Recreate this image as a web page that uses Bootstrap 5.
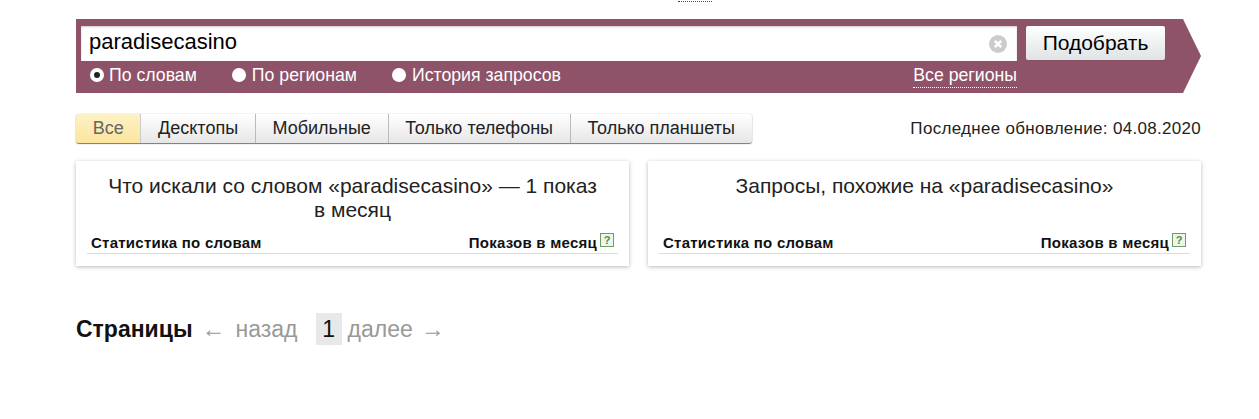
<!DOCTYPE html>
<html lang="ru"><head><meta charset="utf-8">
<link href="https://cdn.jsdelivr.net/npm/bootstrap@5.3.0/dist/css/bootstrap.min.css" rel="stylesheet">
<style>
html,body{height:419px;overflow:hidden}
body{background:#fff;color:#000;font-family:"Liberation Sans",Arial,sans-serif;font-size:16px}
.wrap{padding:0 58px 0 76px;width:1259px}
.topline{height:19px;overflow:hidden}
.topline span{display:block;margin-left:602px;width:34px;height:2px;border-bottom:1px dotted #446}
.searchbar{height:74px;background:#8f5369;clip-path:polygon(0 0,1107px 0,1125px 37px,1107px 74px,0 74px);padding:7px 0 0 5px;width:1125px}
.querybox{width:936px;height:35px;background:#fff;font-size:22px;line-height:31px;padding:0 0 4px 8px;box-shadow:inset 0 1px 2px #ccc}
.clearx{width:18px;height:18px;margin-right:10px;margin-top:4px;flex:none}
.gobtn{width:139px;height:34px;margin-left:9px;padding:0;font-size:21px;line-height:32px;color:#000;border:0;border-radius:2px;background:linear-gradient(#fff,#dfe3e4);box-shadow:0 0 1px #555}
.optrow{width:936px;height:28px;color:#fff;font-size:17.7px;padding:0 0 0 9px}
.dot{width:14px;height:14px;border-radius:50%;background:#fff;display:inline-block;margin-right:6px;flex:none}
.dot.on{border:4px solid #fff;background:#222;margin-right:5px}
.optitem{margin-right:35px}
.regions{color:#fff;border-bottom:1px dotted #fff;line-height:24px;height:25px;margin-left:auto}
.tabrow{margin-top:21px;height:30px}
.tabset{display:flex;height:29px;border-radius:3px;box-shadow:0 1px 1px #777,0 0 1px #888;background:linear-gradient(#fff,#e6e6e6)}
.tabit{font-size:18px;line-height:28px;padding:0 16.7px;border-right:1px solid #bbb;color:#222}
.tabit:last-child{border-right:0}
.tabit.cur{background:linear-gradient(#fdf2c6,#fbe49e);color:#666;border-radius:3px 0 0 3px;border-right:1px solid #ccc}
.stamp{margin-left:auto;font-size:17px;letter-spacing:.3px;color:#222;line-height:30px}
.pane{width:553px;height:105px;box-shadow:0 1px 4px rgba(0,0,0,.28);padding:13px 11px 0;background:#fff}
.pane+.pane{margin-left:19px}
.panerow{margin-top:17px}
.panehead{font-size:21px;line-height:24px;text-align:center;height:48px;color:#222;padding:0 15px}
.panecols{font-size:15px;letter-spacing:.25px;font-weight:700;line-height:16px;border-bottom:1px solid #ddd;padding:7px 4px 0 4px;height:26px;margin-top:6px;color:#111}
.helpq{width:14px;height:14px;border:1px solid #6a9d6a;background:#eef5ea;color:#4d8a4d;font-size:11px;line-height:12px;text-align:center;margin:-2px 0 0 3px;display:inline-block;vertical-align:top;font-weight:700;font-style:normal;letter-spacing:0}
.pagerow{margin-top:47px;font-size:23px;line-height:32px;color:#999}
.pagerow b{color:#111;margin-right:9px}
.arr{color:#999;font-size:24px}
.backword{margin-left:10px}
.curp{background:#e6e8ea;color:#111;width:26px;text-align:center;margin:0 6px 0 18px;display:inline-block}
</style></head><body>
<div class="wrap">
<div class="topline"><span></span></div>
<div class="searchbar">
 <div class="d-flex">
  <div class="querybox d-flex align-items-center justify-content-between">paradisecasino
   <svg class="clearx" viewBox="0 0 17 17"><circle cx="8.5" cy="8.5" r="8.5" fill="#ccc"/><path d="M5.5 5.5l6 6M11.5 5.5l-6 6" stroke="#fff" stroke-width="2.4"/></svg>
  </div>
  <button class="btn gobtn">Подобрать</button>
 </div>
 <div class="optrow d-flex align-items-center">
  <span class="d-flex align-items-center optitem"><i class="dot on"></i>По словам</span>
  <span class="d-flex align-items-center optitem"><i class="dot"></i>По регионам</span>
  <span class="d-flex align-items-center"><i class="dot"></i>История запросов</span>
  <span class="regions">Все регионы</span>
 </div>
</div>
<div class="tabrow d-flex align-items-start">
 <div class="tabset">
  <span class="tabit cur">Все</span><span class="tabit">Десктопы</span><span class="tabit">Мобильные</span><span class="tabit">Только телефоны</span><span class="tabit">Только планшеты</span>
 </div>
 <span class="stamp">Последнее обновление: 04.08.2020</span>
</div>
<div class="d-flex panerow">
 <div class="pane">
  <div class="panehead">Что искали со словом «paradisecasino» — 1 показ в месяц</div>
  <div class="panecols d-flex justify-content-between"><span>Статистика по словам</span><span>Показов в месяц<i class="helpq">?</i></span></div>
 </div>
 <div class="pane">
  <div class="panehead">Запросы, похожие на «paradisecasino»</div>
  <div class="panecols d-flex justify-content-between"><span>Статистика по словам</span><span>Показов в месяц<i class="helpq">?</i></span></div>
 </div>
</div>
<div class="pagerow d-flex align-items-center">
 <b>Страницы</b><span class="arr">←</span><span class="backword">назад</span><span class="curp">1</span><span>далее</span><span class="arr ms-2">→</span>
</div>
</div>
</body></html>
